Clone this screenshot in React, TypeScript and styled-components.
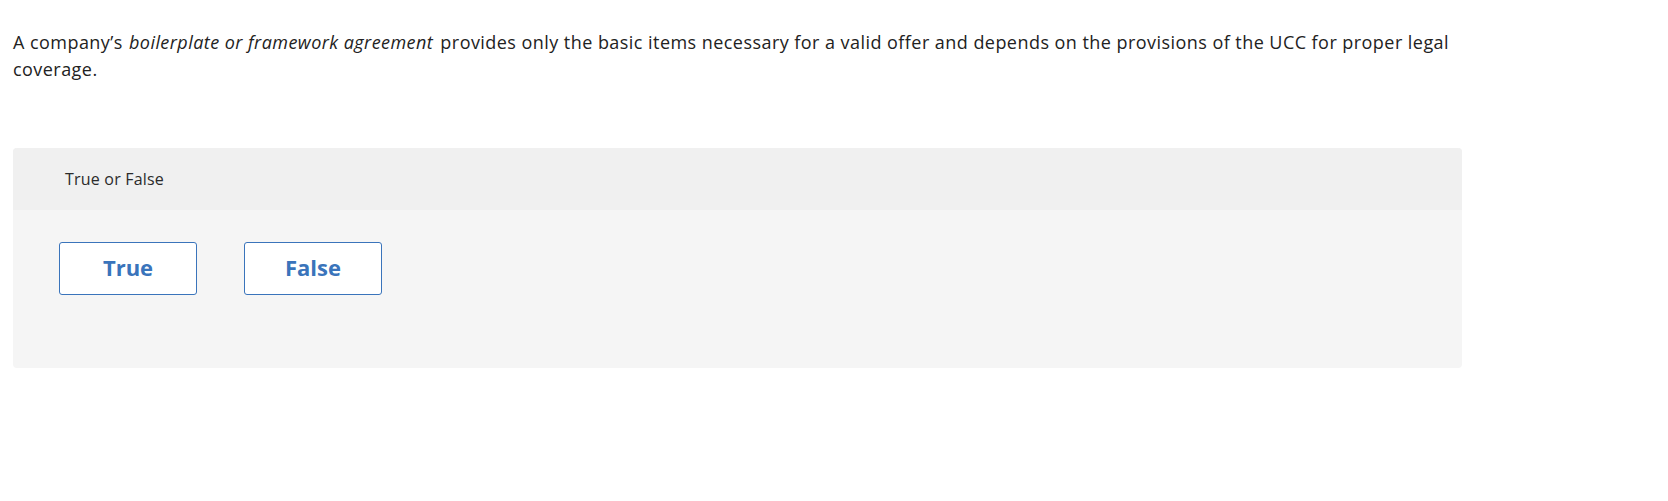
import React from "react";
import styled, { createGlobalStyle } from "styled-components";

const GlobalStyle = createGlobalStyle`
  html, body {
    margin: 0;
    padding: 0;
    background: #ffffff;
  }
  body {
    font-family: "Open Sans", Lato, Arial, sans-serif;
    color: #222222;
  }
`;

const Page = styled.div`
  padding: 29px 0 0 13px;
  width: 1449px;
`;

const Prompt = styled.p`
  margin: 0;
  font-size: 18px;
  line-height: 27px;
  letter-spacing: 0.45px;
  color: #222222;
`;

const Term = styled.em`
  display: inline-block;
  font-style: italic;
  padding: 0 2px 0 1px;
`;

const Panel = styled.section`
  margin-top: 65px;
  border-radius: 4px;
  overflow: hidden;
  background: #f5f5f5;
`;

const PanelHeader = styled.header`
  height: 62px;
  display: flex;
  align-items: center;
  padding-left: 52px;
  background: #f0f0f0;
  font-size: 16px;
  letter-spacing: 0.2px;
  color: #2b2b2b;
`;

const Choices = styled.div`
  display: flex;
  gap: 47px;
  padding: 32px 0 73px 46px;
`;

const Choice = styled.button`
  width: 138px;
  height: 53px;
  box-sizing: border-box;
  padding: 0 0 4px;
  background: #ffffff;
  border: 1px solid #3a74bb;
  border-radius: 3px;
  font-family: "Open Sans", Lato, Arial, sans-serif;
  font-weight: 700;
  font-size: 22px;
  color: #3a74bb;
  cursor: pointer;
`;

export default function App() {
  return (
    <>
      <GlobalStyle />
      <Page>
        <Prompt>
          A company’s <Term>boilerplate or framework agreement</Term> provides
          only the basic items necessary for a valid offer and depends on the
          provisions of the UCC for proper legal coverage.
        </Prompt>
        <Panel>
          <PanelHeader>True or False</PanelHeader>
          <Choices>
            <Choice>True</Choice>
            <Choice>False</Choice>
          </Choices>
        </Panel>
      </Page>
    </>
  );
}
